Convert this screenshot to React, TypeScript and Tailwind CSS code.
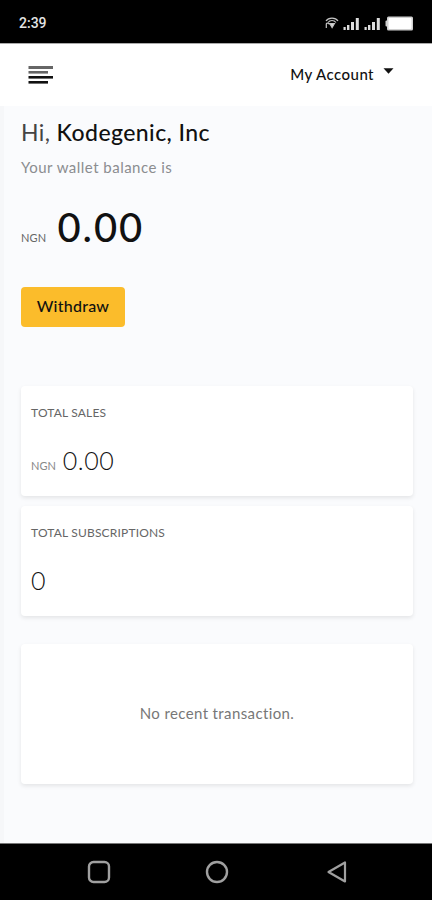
import type { ReactNode } from 'react';

function SignalBars() {
    return (
        <svg width="17" height="14" viewBox="0 0 17 14" fill="#dedede">
            <rect x="0.5" y="10" width="2.2" height="3" />
            <rect x="4" y="8" width="2.4" height="5" />
            <rect x="8" y="5" width="3" height="8" />
            <rect x="12.8" y="1" width="3" height="12" />
        </svg>
    );
}

function StatusBar() {
    return (
        <div className="h-[43px] bg-black text-white flex items-center justify-between pl-[19px] pr-[18px] pt-[3px]">
            <span className="font-['Roboto',sans-serif] text-[14px] leading-5 font-medium text-[#e4e4e4]">
                2:39
            </span>
            <div className="flex items-center">
                <svg width="14" height="14" viewBox="0 0 14 14" fill="none" stroke="#c4c4c4" strokeWidth="1.2">
                    <path d="M1 5C3.5 1.2 10.5 1.2 13 5" />
                    <path d="M3 6.5C5 3.8 9 3.8 11 6.5" />
                    <path d="M1.3 12V8.2C1.3 6.7 4.3 6.7 4.3 8.5" />
                    <path d="M4.8 7.5h4.6L7.1 11.5z" fill="#d8d8d8" />
                </svg>
                <div className="ml-[4px] mt-[2px] flex gap-[4px]">
                    <SignalBars />
                    <SignalBars />
                </div>
                <svg className="ml-[4px]" width="29" height="15" viewBox="0 0 29 15">
                    <rect x="0.5" y="4.5" width="3" height="6" rx="1" fill="#d0d0d0" />
                    <rect x="2" y="0.5" width="26" height="14" rx="1.5" fill="#d0d0d0" />
                    <rect x="3.5" y="2" width="23" height="11" rx="1" fill="#fff" />
                </svg>
            </div>
        </div>
    );
}

function Header() {
    return (
        <header className="h-[63px] bg-white border-t border-[#aaa] flex items-center justify-between pl-7 pr-[38px]">
            <svg width="26" height="20" viewBox="0 0 26 20">
                <rect x="0.5" y="1" width="24.5" height="3" fill="#666" />
                <rect x="0.5" y="6" width="19.5" height="2.6" fill="#666" />
                <rect x="0.5" y="11" width="24.5" height="2.6" fill="#111" />
                <rect x="0.5" y="16" width="19.5" height="2.6" fill="#111" />
            </svg>
            <button className="flex items-center text-[15px] leading-5 font-medium mb-[3px]">
                <span className="tracking-[0.45px] text-[#111]">My Account</span>
                <svg className="ml-[9px] mb-[5px]" width="11" height="6" viewBox="0 0 11 6">
                    <path d="M0.5 0.3h10L5.5 5.8z" fill="#111" />
                </svg>
            </button>
        </header>
    );
}

function StatCard({ title, children }: { title: string; children: ReactNode }) {
    return (
        <div className="h-[110px] bg-white rounded-[4px] shadow-[0_2px_4px_rgba(0,0,0,0.09)] px-[10px] pt-[17px]">
            <h2 className="text-[12px] leading-5 tracking-[0.18px] text-[#666]">{title}</h2>
            <div className="mt-[21px] h-8 flex items-baseline leading-8">{children}</div>
        </div>
    );
}

function NavigationBar() {
    return (
        <nav className="h-[57px] bg-black border-t border-[#777] flex items-center pl-[87px]">
            <svg width="24" height="24" viewBox="0 0 24 24" fill="none" stroke="#a0a0a0" strokeWidth="2.4">
                <rect x="2" y="2" width="20" height="20" rx="4.5" />
            </svg>
            <svg className="ml-[94px]" width="24" height="24" viewBox="0 0 24 24" fill="none" stroke="#a0a0a0" strokeWidth="2.4">
                <circle cx="12" cy="12" r="10" />
            </svg>
            <svg className="ml-[97px]" width="22" height="24" viewBox="0 0 22 24" fill="none" stroke="#a0a0a0" strokeWidth="2.2" strokeLinejoin="round">
                <path d="M19 2.5v19L2.5 12z" />
            </svg>
        </nav>
    );
}

export default function App() {
    return (
        <div className="w-[432px] h-[900px] overflow-hidden flex flex-col bg-[#fafbfd] font-['Lato',sans-serif] text-[#111]">
            <StatusBar />
            <Header />
            <main className="flex-1 border-l-4 border-[#f6f7f9] pl-[17px] pr-[19px] pt-[10px]">
                <h1 className="text-[23px] leading-8 font-medium tracking-[0.42px]">
                    <span className="font-normal text-[#444]">Hi,</span> Kodegenic, Inc
                </h1>
                <p className="mt-[9px] text-[15px] leading-5 tracking-[0.48px] text-[#8b8d90]">Your wallet balance is</p>
                <div className="mt-[26px] h-12 flex items-baseline leading-[48px]">
                    <span className="text-[11px] tracking-[0.2px] text-[#666]">NGN</span>
                    <span className="ml-[11px] text-[40px] font-medium tracking-[1.9px]">0.00</span>
                </div>
                <button className="mt-[36px] block w-[104px] h-10 rounded-[4px] bg-[#fbbc2b] text-[16px] leading-5 font-medium tracking-[0.25px] pb-[2px]">
                    Withdraw
                </button>
                <section className="mt-[59px] flex flex-col gap-[10px]">
                    <StatCard title="TOTAL SALES">
                        <span className="text-[11px] text-[#888]">NGN</span>
                        <span className="ml-[7px] text-[25px] font-light tracking-[0.5px]">0.00</span>
                    </StatCard>
                    <StatCard title="TOTAL SUBSCRIPTIONS">
                        <span className="text-[25px] font-light">0</span>
                    </StatCard>
                </section>
                <div className="mt-[28px] h-[140px] bg-white rounded-[4px] shadow-[0_2px_4px_rgba(0,0,0,0.09)] flex items-center justify-center pb-[3px]">
                    <p className="text-[15px] leading-5 tracking-[0.38px] text-[#777]">No recent transaction.</p>
                </div>
            </main>
            <NavigationBar />
        </div>
    );
}
